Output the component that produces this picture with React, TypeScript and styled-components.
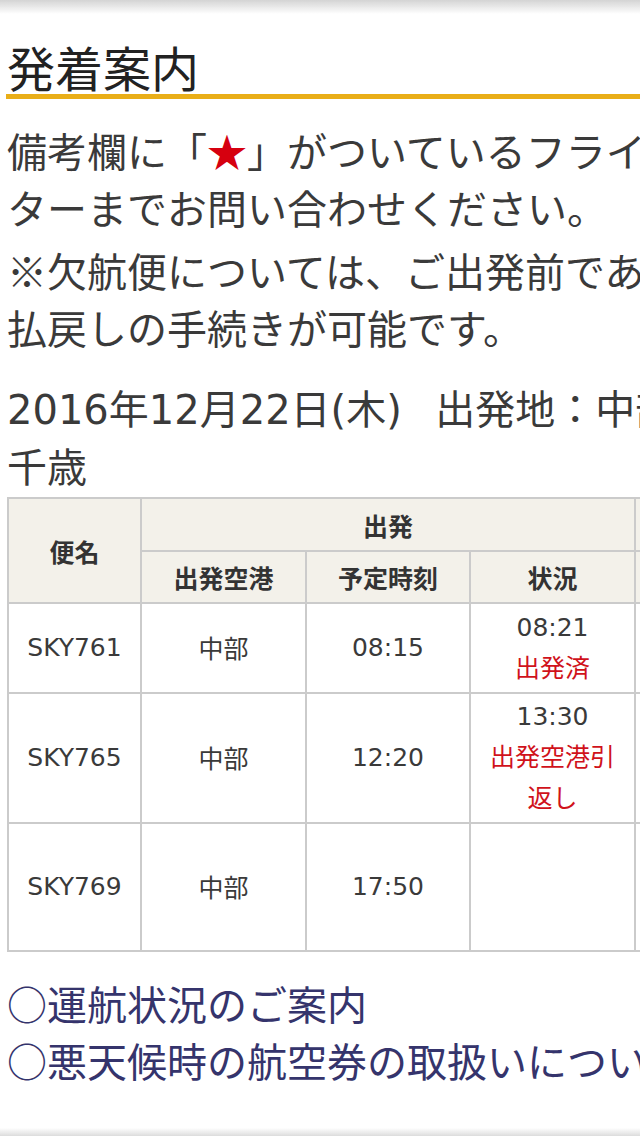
import React from "react";
import styled, { createGlobalStyle } from "styled-components";

const Global = createGlobalStyle`
  html, body {
    margin: 0;
    padding: 0;
    background: #fff;
    overflow: hidden;
  }
  body {
    font-family: "DejaVu Sans", "Noto Sans CJK JP", sans-serif;
    color: #3a3a3a;
  }
`;

const Page = styled.div`
  width: 640px;
  height: 1136px;
  overflow: hidden;
  padding: 38px 0 0 7px;
  box-sizing: border-box;
`;

const TopShade = styled.div`
  position: fixed;
  left: 0;
  top: 0;
  width: 640px;
  height: 14px;
  background: linear-gradient(#d4d4d4, rgba(255, 255, 255, 0));
  pointer-events: none;
`;

const BottomShade = styled.div`
  position: fixed;
  left: 0;
  bottom: 0;
  width: 640px;
  height: 8px;
  background: linear-gradient(rgba(255, 255, 255, 0), #dcdcdc);
  pointer-events: none;
`;

const Heading = styled.h1`
  margin: 0 0 0 -1px;
  height: 56px;
  font-family: "Noto Sans CJK JP", sans-serif;
  font-weight: 400;
  font-size: 48px;
  line-height: 56px;
  color: #222;
  border-bottom: 5px solid #e9ae18;
  padding-left: 1px;
  width: 700px;
  overflow: visible;
`;

const Para = styled.div<{ $top: number; $lh: number }>`
  margin-top: ${(p) => p.$top}px;
  font-size: 40px;
  line-height: ${(p) => p.$lh}px;
  color: #3a3a3a;
  & > div {
    height: ${(p) => p.$lh}px;
  }
`;

const Line = styled.div`
  white-space: nowrap;
`;

const Cjk = styled.span`
  font-family: "Noto Sans CJK JP", sans-serif;
`;

const Star = styled(Cjk)`
  color: #d6000f;
`;

const Table = styled.table`
  margin-top: 0;
  border-collapse: collapse;
  table-layout: fixed;
  width: 1320px;
  font-size: 25px;
`;

const Th = styled.th`
  background: #f3f1ea;
  border: 2px solid #cbcbcb;
  font-family: "Noto Sans CJK JP", sans-serif;
  font-weight: 700;
  color: #333;
  text-align: center;
  padding: 0;
  line-height: 32px;
`;

const Td = styled.td`
  border: 2px solid #cbcbcb;
  text-align: center;
  vertical-align: middle;
  padding: 0 10px;
  line-height: 38px;
  color: #3a3a3a;
`;

const HeadRow = styled.tr<{ $h: number }>`
  height: ${(p) => p.$h}px;
`;

const BodyRow = styled.tr<{ $h: number }>`
  height: ${(p) => p.$h}px;
`;

const Red = styled.span`
  color: #d0121b;
  font-family: "Noto Sans CJK JP", sans-serif;
`;

const Links = styled.div`
  margin-top: 23px;
  font-size: 40px;
  line-height: 57px;
  color: #35346c;
`;

const LinkLine = styled.a`
  display: block;
  height: 57px;
  white-space: nowrap;
  color: inherit;
  text-decoration: none;
  font-family: "Noto Sans CJK JP", sans-serif;
`;

type Flight = {
  name: string;
  from: string;
  time: string;
  status: string;
  note: string;
  h: number;
  to: string;
  arrTime: string;
  arrStatus: string;
};

const flights: Flight[] = [
  { name: "SKY761", from: "中部", time: "08:15", status: "08:21", note: "出発済", h: 90, to: "新千歳", arrTime: "10:05", arrStatus: "" },
  { name: "SKY765", from: "中部", time: "12:20", status: "13:30", note: "出発空港引返し", h: 130, to: "新千歳", arrTime: "14:10", arrStatus: "" },
  { name: "SKY769", from: "中部", time: "17:50", status: "", note: "", h: 128, to: "新千歳", arrTime: "19:40", arrStatus: "" },
];

export default function App() {
  return (
    <>
      <Global />
      <TopShade />
      <Page>
        <Heading>発着案内</Heading>
        <Para $top={21} $lh={60}>
          <Line>
            備考欄に「<Star>★</Star>」がついているフライトにつきましては、お近くのカウン
          </Line>
          <Line>ターまでお問い合わせください。</Line>
          <Line>
            <Cjk>※</Cjk>欠航便については、ご出発前であれば
          </Line>
          <Line>払戻しの手続きが可能です。</Line>
        </Para>
        <Para $top={21} $lh={58}>
          <Line>2016年12月22日(木){"\u00a0\u00a0\u2009"}出発地：中部　到着地：新</Line>
          <Line>千歳</Line>
        </Para>
        <Table>
          <colgroup>
            <col style={{ width: 133 }} />
            <col style={{ width: 165 }} />
            <col style={{ width: 164 }} />
            <col style={{ width: 165 }} />
            <col style={{ width: 165 }} />
            <col style={{ width: 165 }} />
            <col style={{ width: 165 }} />
            <col style={{ width: 198 }} />
          </colgroup>
          <thead>
            <HeadRow $h={53}>
              <Th rowSpan={2}>便名</Th>
              <Th colSpan={3}>出発</Th>
              <Th colSpan={3}>到着</Th>
              <Th rowSpan={2}>備考</Th>
            </HeadRow>
            <HeadRow $h={52}>
              <Th>出発空港</Th>
              <Th>予定時刻</Th>
              <Th>状況</Th>
              <Th>到着空港</Th>
              <Th>予定時刻</Th>
              <Th>状況</Th>
            </HeadRow>
          </thead>
          <tbody>
            {flights.map((f) => (
              <BodyRow key={f.name} $h={f.h}>
                <Td>{f.name}</Td>
                <Td>
                  <Cjk>{f.from}</Cjk>
                </Td>
                <Td>{f.time}</Td>
                <Td>
                  {f.status}
                  {f.note && (
                    <>
                      <br />
                      <Red>{f.note}</Red>
                    </>
                  )}
                </Td>
                <Td>
                  <Cjk>{f.to}</Cjk>
                </Td>
                <Td>{f.arrTime}</Td>
                <Td>{f.arrStatus}</Td>
                <Td></Td>
              </BodyRow>
            ))}
          </tbody>
        </Table>
        <Links>
          <LinkLine href="#">○運航状況のご案内</LinkLine>
          <LinkLine href="#">○悪天候時の航空券の取扱いについて</LinkLine>
        </Links>
      </Page>
      <BottomShade />
    </>
  );
}
